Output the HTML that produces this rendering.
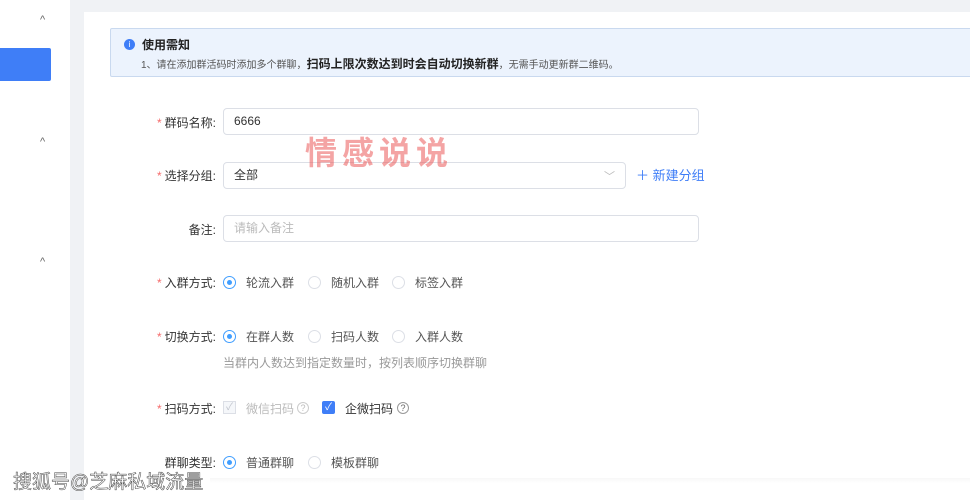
<!DOCTYPE html>
<html><head><meta charset="utf-8"><style>
*{margin:0;padding:0;box-sizing:border-box}
body{width:970px;height:500px;overflow:hidden;background:#f0f2f5;font-family:"Liberation Sans","Noto Sans CJK SC",sans-serif;position:relative;color:#333}
.a{position:absolute;white-space:nowrap}
.side{left:0;top:0;width:70px;height:500px;background:#fff}
.car{font-size:11px;color:#666;left:40px}
.main{left:84px;top:12px;width:886px;height:488px;background:#fff}
.note{left:110px;top:28px;width:870px;height:49px;background:#ecf3fd;border:1px solid #c9d9ef;border-radius:2px}
.lbl{font-size:12px;color:#333;text-align:right;width:120px;left:96px}
.lbl i{color:#f56c6c;font-style:normal;margin-right:3px}
.inp{left:223px;width:476px;height:27px;border:1px solid #dcdfe6;border-radius:4px;font-size:12px;padding-left:10px;line-height:25px;background:#fff}
.r{width:13px;height:13px;border-radius:50%;border:1px solid #dcdfe6;background:#fff}
.r.on{border-color:#409eff}
.r.on:after{content:"";position:absolute;left:3px;top:3px;width:5px;height:5px;border-radius:50%;background:#409eff}
.t{font-size:12px;color:#555}
.q{width:12px;height:12px;border-radius:50%;border:1px solid #999;font-size:9px;text-align:center;line-height:10px;color:#666}
</style></head><body>
<div class="a side"></div>
<div class="a car" style="top:14px">^</div>
<div class="a" style="left:0;top:48px;width:51px;height:33px;background:#3f7ef7;border-radius:0 2px 2px 0"></div>
<div class="a car" style="top:136px">^</div>
<div class="a car" style="top:256px">^</div>
<div class="a main"></div>
<div class="a note"></div>
<div class="a" style="left:124px;top:39px;width:11px;height:11px;border-radius:50%;background:#3f7ef7;color:#fff;font-size:8px;text-align:center;line-height:11px">i</div>
<div class="a" style="left:142px;top:36px;font-size:12px;font-weight:bold;color:#222">使用需知</div>
<div class="a" style="left:141px;top:55px;font-size:10px;color:#555">1、请在添加群活码时添加多个群聊，<b style="font-size:12px;color:#222">扫码上限次数达到时会自动切换新群</b>，无需手动更新群二维码。</div>

<div class="a lbl" style="top:114px"><i>*</i>群码名称:</div>
<div class="a inp" style="top:108px;color:#333">6666</div>

<div class="a lbl" style="top:167px"><i>*</i>选择分组:</div>
<div class="a inp" style="top:162px;width:403px">全部</div>
<div class="a" style="left:604px;top:168px;font-size:11px;color:#bbb">﹀</div>
<div class="a" style="left:636px;top:165px;font-size:13px;color:#3f7ef7">＋ 新建分组</div>
<div class="a" style="left:305px;top:135px;font-size:32px;line-height:36px;font-weight:bold;color:rgba(235,90,90,0.55);letter-spacing:5px">情感说说</div>

<div class="a lbl" style="top:221px">备注:</div>
<div class="a inp" style="top:215px;color:#bbb">请输入备注</div>

<div class="a lbl" style="top:274px"><i>*</i>入群方式:</div>
<div class="a r on" style="left:223px;top:276px"></div><div class="a t" style="left:246px;top:274px">轮流入群</div>
<div class="a r" style="left:308px;top:276px"></div><div class="a t" style="left:331px;top:274px">随机入群</div>
<div class="a r" style="left:392px;top:276px"></div><div class="a t" style="left:415px;top:274px">标签入群</div>

<div class="a lbl" style="top:328px"><i>*</i>切换方式:</div>
<div class="a r on" style="left:223px;top:330px"></div><div class="a t" style="left:246px;top:328px">在群人数</div>
<div class="a r" style="left:308px;top:330px"></div><div class="a t" style="left:331px;top:328px">扫码人数</div>
<div class="a r" style="left:392px;top:330px"></div><div class="a t" style="left:415px;top:328px">入群人数</div>
<div class="a" style="left:223px;top:354px;font-size:12px;color:#999">当群内人数达到指定数量时，按列表顺序切换群聊</div>

<div class="a lbl" style="top:400px"><i>*</i>扫码方式:</div>
<div class="a" style="left:223px;top:401px;width:13px;height:13px;border:1px solid #dcdfe6;background:#f5f7fa;color:#c0c4cc;font-size:10px;line-height:11px;text-align:center">✓</div>
<div class="a" style="left:246px;top:400px;font-size:12px;color:#bbb">微信扫码</div>
<div class="a q" style="left:297px;top:402px;border-color:#ccc;color:#bbb">?</div>
<div class="a" style="left:322px;top:401px;width:13px;height:13px;border-radius:2px;background:#3f7ef7;color:#fff;font-size:10px;line-height:13px;text-align:center">✓</div>
<div class="a" style="left:345px;top:400px;font-size:12px;color:#333">企微扫码</div>
<div class="a q" style="left:397px;top:402px">?</div>

<div class="a lbl" style="top:454px">群聊类型:</div>
<div class="a r on" style="left:223px;top:456px"></div><div class="a t" style="left:246px;top:454px">普通群聊</div>
<div class="a r" style="left:308px;top:456px"></div><div class="a t" style="left:331px;top:454px">模板群聊</div>
<div class="a" style="left:210px;top:478px;width:760px;height:22px;background:linear-gradient(#f7f7f7,#fff 5px)"></div>
<div class="a" style="left:13px;top:467px;font-size:19px;color:#fff;-webkit-text-stroke:0.5px #444">搜狐号@芝麻私域流量</div>
</body></html>
